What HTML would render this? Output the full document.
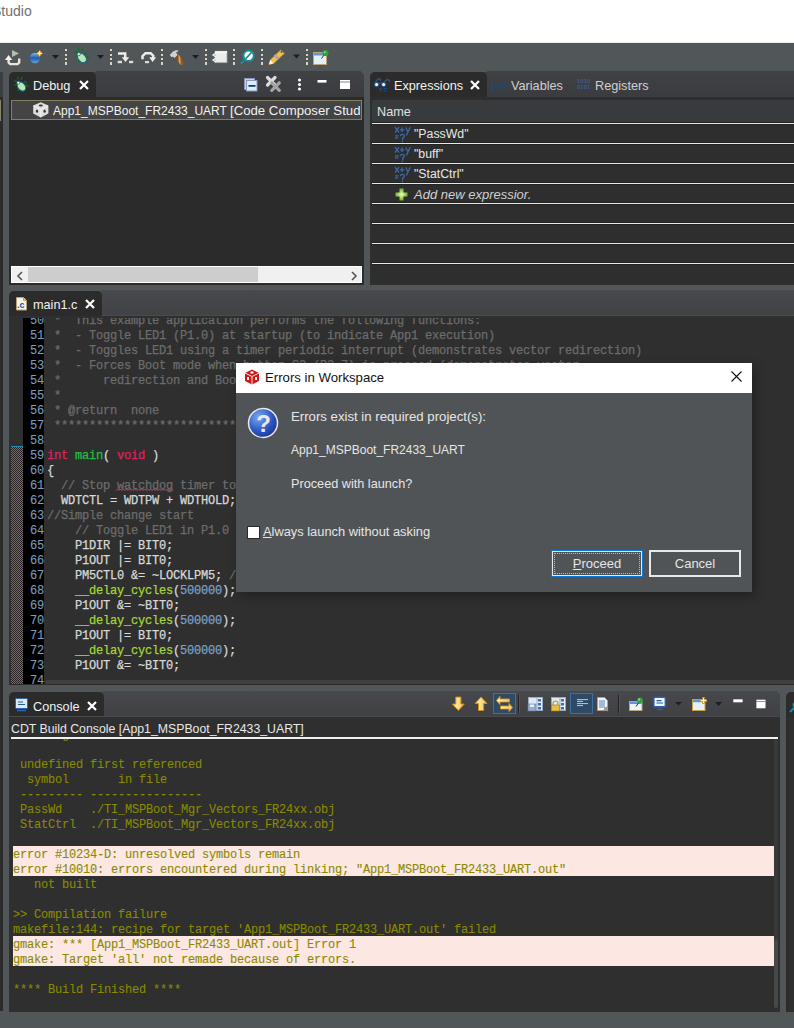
<!DOCTYPE html>
<html><head><meta charset="utf-8">
<style>
*{margin:0;padding:0;box-sizing:border-box}
html,body{width:794px;height:1028px;overflow:hidden;background:#515658;font-family:"Liberation Sans",sans-serif;font-size:12px;color:#ddd}
.a{position:absolute}
.t{position:absolute;white-space:pre;line-height:1}
.mono{font-family:"Liberation Mono",monospace;font-size:12px;letter-spacing:-0.2px;white-space:pre;line-height:15px;-webkit-text-stroke:0.25px currentColor}
.panel{position:absolute;background:#2b2b2b;border-radius:5px 5px 0 0;overflow:hidden}
.hdr{position:absolute;left:0;top:0;right:0;background:linear-gradient(#404144,#3b3c3f)}
.tab{position:absolute;left:0;top:0;background:#2b2b2b;border-radius:5px 5px 0 0}
.tabt{position:absolute;font-size:12.7px;color:#f2f2f2;white-space:pre;line-height:1}
svg{position:absolute;overflow:visible}
.cm{color:#6c6c6c}
.kw{color:#e0205c}
.fn{color:#22c040}
.mc{color:#a6d634}
.nu{color:#7a9fc6}
.con{color:#8a8a00}
.rl{position:absolute;left:2px;width:430px;height:1px;background:#e8e8e8;box-shadow:0 -1px #232323,0 1px #232323}
</style></head>
<body>
<!-- title bar -->
<div class="a" style="left:0;top:0;width:794px;height:42px;background:#fff"></div>
<div class="t" style="left:-8px;top:4px;font-size:14px;color:#707070">Studio</div>
<div class="a" style="left:0;top:42px;width:794px;height:1px;background:#ececec"></div>

<!-- main toolbar -->
<svg width="794" height="28" style="left:0;top:43px" id="tb">
  <defs>
    <linearGradient id="ball" x1="0" y1="0" x2="0" y2="1"><stop offset="0" stop-color="#8ab8e8"/><stop offset="0.5" stop-color="#1c60aa"/><stop offset="1" stop-color="#6aa0d8"/></linearGradient>
    <linearGradient id="hnd" x1="0" y1="0" x2="1" y2="0"><stop offset="0" stop-color="#8a4a10"/><stop offset="0.5" stop-color="#e0a050"/><stop offset="1" stop-color="#9a5a18"/></linearGradient>
  </defs>
  <g fill="#ddd5c4">
    <rect x="65" y="6" width="2" height="2"/><rect x="65" y="11" width="2" height="2"/><rect x="65" y="15" width="2" height="2"/><rect x="65" y="19" width="2" height="3"/>
    <rect x="110" y="6" width="2" height="2"/><rect x="110" y="11" width="2" height="2"/><rect x="110" y="15" width="2" height="2"/><rect x="110" y="19" width="2" height="3"/>
    <rect x="161" y="6" width="2" height="2"/><rect x="161" y="11" width="2" height="2"/><rect x="161" y="15" width="2" height="2"/><rect x="161" y="19" width="2" height="3"/>
    <rect x="205" y="6" width="2" height="2"/><rect x="205" y="11" width="2" height="2"/><rect x="205" y="15" width="2" height="2"/><rect x="205" y="19" width="2" height="3"/>
    <rect x="233" y="6" width="2" height="2"/><rect x="233" y="11" width="2" height="2"/><rect x="233" y="15" width="2" height="2"/><rect x="233" y="19" width="2" height="3"/>
    <rect x="261" y="6" width="2" height="2"/><rect x="261" y="11" width="2" height="2"/><rect x="261" y="15" width="2" height="2"/><rect x="261" y="19" width="2" height="3"/>
    <rect x="306" y="6" width="2" height="2"/><rect x="306" y="11" width="2" height="2"/><rect x="306" y="15" width="2" height="2"/><rect x="306" y="19" width="2" height="3"/>
  </g>
  <g fill="#1e1e1e">
    <path d="M52 12h7l-3.5 4z"/><path d="M97 12h7l-3.5 4z"/><path d="M192 12h7l-3.5 4z"/><path d="M293 11.6h7l-3.5 4z"/>
  </g>
  <!-- icon1 -->
  <path d="M12 7l7 3.5-7 3.5z" fill="#b2bdb2"/>
  <path d="M8.6 16.5v3l1.6 1.6h7.4l1.6-1.6v-4" fill="none" stroke="#ece5d8" stroke-width="2.4"/>
  <path d="M4.9 17l3.7-5 3.7 5z" fill="#f4f0e8"/>
  <!-- icon2 blue ball -->
  <circle cx="35" cy="15" r="5.2" fill="url(#ball)"/>
  <path d="M39.6 6.9l1.4 2.1 2.1 1.4-2.1 1.4-1.4 2.1-1.4-2.1-2.1-1.4 2.1-1.4z" fill="#e8a010"/>
  <path d="M39.6 8.2v4.4M37.4 10.4h4.4" stroke="#fff8d8" stroke-width="1.2"/>
  <!-- bug -->
  <g stroke="#1a6a38" stroke-width="1.3" stroke-linecap="round"><path d="M78.5 5.5v2.5M82.5 6l-1 2M74.5 9.5h3M85 10l2 1M75.5 13.5l2-1M87 13.5l1.5 1.5M78.5 16l.5 3M82.5 18l1 2"/></g>
  <ellipse cx="82" cy="15" rx="3.8" ry="5.2" transform="rotate(-40 82 15)" fill="#b8e8b0" stroke="#1a6a88" stroke-width="1.2"/>
  <circle cx="78.8" cy="11.2" r="1.6" fill="#e8f8e8" stroke="#1a6a88" stroke-width="0.8"/>
  <!-- step into -->
  <path d="M118 10.5h7.2v4.5" fill="none" stroke="#f0ece6" stroke-width="2.5"/>
  <path d="M121.8 14.3h7.4l-3.7 4.7z" fill="#f0ece6"/>
  <rect x="117.7" y="17.8" width="4.3" height="2.4" fill="#e0dcd4"/><rect x="129" y="17.8" width="4.2" height="2.4" fill="#e0dcd4"/>
  <!-- step over -->
  <path d="M142.5 16.2v-3l3-3h5.2l2.5 2.5v2.3" fill="none" stroke="#f0ece6" stroke-width="2.5"/>
  <path d="M149.2 14.2h6.9l-3.5 4.8z" fill="#f0ece6"/>
  <rect x="145" y="18" width="4" height="2.2" fill="#e0dcd4"/>
  <!-- hammer -->
  <path d="M177.5 13.5l4 6.5" stroke="url(#hnd)" stroke-width="4.2" stroke-linecap="round"/>
  <path d="M169.8 12l3.2-3.5 3-1.2 2.6.2-.6 1-2 .8 1.5 2.6-3 3-1.8-1.4-1.2.8z" fill="#d0d0d0"/>
  <!-- console icon -->
  <rect x="215" y="8.2" width="12" height="11.5" fill="#ececec" stroke="#a0a0a0" stroke-width="0.8"/>
  <rect x="215" y="8.2" width="12" height="2" fill="#f8f8f8"/>
  <path d="M216 10l-3 2 3 2M216 15l-3 2 3 2" fill="none" stroke="#f4f4f4" stroke-width="1.4"/>
  <!-- magnifier -->
  <path d="M245 16.5l-3.6 3.6" stroke="#1a8a9a" stroke-width="2.2" stroke-linecap="round"/>
  <circle cx="248.6" cy="12.8" r="5.2" fill="#fff" stroke="#1a8a9a" stroke-width="2"/>
  <path d="M245.5 16l6-6.5" stroke="#1a8a9a" stroke-width="1.8"/>
  <!-- pencil -->
  <path d="M269 21.5l1.2-4.5 10.5-10 3.6 3.4-10.5 10z" fill="#f2c050" stroke="#c88a20" stroke-width="0.8"/>
  <path d="M274.5 12l3.8 3.6" stroke="#a8a8a8" stroke-width="3"/>
  <path d="M269 21.5l1.2-4.5 3.3 3.2z" fill="#fffbea"/>
  <circle cx="281.5" cy="9" r="0.9" fill="#3050a0"/>
  <!-- window w pin -->
  <rect x="313.5" y="9.5" width="13" height="12" fill="#e4f0f8" stroke="#b8a478"/>
  <rect x="314" y="10" width="12" height="2.5" fill="#5a98d8"/>
  <path d="M324 12l-2.5 3.5" stroke="#203020" stroke-width="1"/>
  <circle cx="325.5" cy="10" r="3" fill="#30a040"/><circle cx="324.8" cy="9.2" r="1" fill="#80e080"/>
</svg>

<!-- left cut panel -->
<div class="a" style="left:0;top:72px;width:3px;height:25px;background:#3d3e40"></div>
<div class="a" style="left:0;top:97px;width:3px;height:914px;background:#2b2b2b"></div>
<div class="a" style="left:0;top:100px;width:1px;height:21px;background:#8c846a"></div>

<!-- Debug panel -->
<div class="a" style="left:96px;top:71px;width:265px;height:1px;background:#404144"></div>
<div class="a" style="left:487px;top:71px;width:307px;height:1px;background:#404144"></div>
<div class="panel" style="left:9px;top:72px;width:355px;height:213px">
  <div class="hdr" style="height:25px"></div>
  <div class="tab" style="width:87px;height:25px"></div>
  <svg width="20" height="20" style="left:-2px;top:-1.5px">
    <g stroke="#1a6a38" stroke-width="1.2" stroke-linecap="round"><path d="M11 6v2M15 6.5l-1 2M7 10h2.5M17.5 10.5l2 1M8 14l2-1M19.5 14l1.5 1.5M11 16.5l.5 3M15 18.5l1 2"/></g>
    <ellipse cx="14.5" cy="15.5" rx="3.6" ry="5" transform="rotate(-40 14.5 15.5)" fill="#b8e8b0" stroke="#1a6a88" stroke-width="1.1"/>
    <circle cx="11.3" cy="11.7" r="1.5" fill="#e8f8e8" stroke="#1a6a88" stroke-width="0.7"/>
  </svg>
  <div class="tabt" style="left:24px;top:8px">Debug</div>
  <svg width="12" height="12" style="left:70px;top:8px"><path d="M1 1l8 8M9 1l-8 8" stroke="#fff" stroke-width="2.2"/></svg>
  <svg width="120" height="25" style="left:233px;top:0">
    <rect x="2.5" y="6.5" width="10" height="11" fill="#b8d8f4" stroke="#8898b8"/><rect x="4.5" y="8.5" width="10.5" height="10.5" fill="#d8ecfc" stroke="#8898b8"/><path d="M6.5 13.8h7" stroke="#10386a" stroke-width="1.8"/>
    <path d="M25.5 5.5l7.5 7.5M33 5.5l-7.5 7.5" stroke="#dcdcdc" stroke-width="3.2" stroke-linecap="round"/>
    <path d="M29.8 10.8l7.5 7.5M37.3 10.8l-7.5 7.5" stroke="#a4a4a4" stroke-width="3.2" stroke-linecap="round"/>
    <circle cx="57.5" cy="8" r="1.5" fill="#fff"/><circle cx="57.5" cy="12.5" r="1.5" fill="#fff"/><circle cx="57.5" cy="17" r="1.5" fill="#fff"/>
    <rect x="75.5" y="8" width="9" height="2.6" fill="#fff"/>
    <rect x="98" y="8" width="10" height="9" fill="#fff"/><rect x="98" y="9.5" width="10" height="1" fill="#888"/>
  </svg>
  <div class="a" style="left:2px;top:28px;width:351px;height:20px;border:1px solid #857f65;background:#444"></div>
  <svg width="16" height="16" style="left:24px;top:30px">
    <path d="M7.8 0.3L15.4 3.6V11.6L7.8 15.6L0.2 11.6V3.6Z" fill="#dedede"/>
    <path d="M0.6 3.8L7.8 7.4L15 3.8M7.8 7.4V15.2" stroke="#f4f4f4" stroke-width="1" fill="none"/>
    <ellipse cx="7.8" cy="3.6" rx="2" ry="1" fill="#333"/><ellipse cx="4" cy="9.2" rx="1.1" ry="1.6" fill="#333"/><ellipse cx="11.6" cy="9.2" rx="1.1" ry="1.6" fill="#333"/>
  </svg>
  <div class="t" style="left:44px;top:32px;width:307px;height:16px;overflow:hidden;font-size:12px;color:#f2f2f2">App1_MSPBoot_FR2433_UART <span style="font-size:13.2px">[Code Composer Studio]</span></div>
  <div class="a" style="left:2px;top:194px;width:351px;height:17px;background:#f0f0f0;border:1px solid #fff"></div>
  <div class="a" style="left:19px;top:195px;width:230px;height:15px;background:#cdcdcd"></div>
  <svg width="10" height="10" style="left:6px;top:199px"><path d="M7 1l-4 4 4 4" fill="none" stroke="#555" stroke-width="1.6"/></svg>
  <svg width="10" height="10" style="left:341px;top:199px"><path d="M2 1l4 4-4 4" fill="none" stroke="#555" stroke-width="1.6"/></svg>
</div>

<!-- Expressions panel -->
<div class="panel" style="left:370px;top:72px;width:430px;height:213px;background:#2e2e2e">
  <div class="hdr" style="height:25px"></div>
  <div class="tab" style="width:117px;height:25px"></div>
  <svg width="20" height="20" style="left:4px;top:5px">
    <path d="M0.8 7Q3 1.5 5.3 1.6Q6.6 2 6.6 4M8.8 7Q11.5 2.5 14 2.6Q15.6 3 16 5M2.4 6.2H9.5" stroke="#2f5a8c" fill="none" stroke-width="1.1"/>
    <circle cx="2.6" cy="7.6" r="2.7" fill="#2f5a8c"/><circle cx="9.6" cy="7.6" r="2.7" fill="#2f5a8c"/>
    <circle cx="2.6" cy="7.6" r="1.5" fill="#eef8ff"/><circle cx="9.6" cy="7.6" r="1.5" fill="#eef8ff"/>
    <path d="M5.3 11l2.4 3M7.7 11l-2.4 3M9.5 11.5h3.5M9.5 13.8h3.5" stroke="#1f4a80" stroke-width="1.1"/>
  </svg>
  <div class="tabt" style="left:24px;top:8px">Expressions</div>
  <svg width="12" height="12" style="left:100px;top:8px"><path d="M1 1l8 8M9 1l-8 8" stroke="#fff" stroke-width="2.2"/></svg>
  <div class="t" style="left:121px;top:9px;font-size:9.5px;letter-spacing:-0.3px;color:#29476e;font-weight:bold">(x)=</div>
  <div class="tabt" style="left:141px;top:8px;color:#d0d0d0">Variables</div>
  <div class="t" style="left:207px;top:6px;font-size:6px;line-height:6px;color:#3a5a8a;font-weight:bold">1010
0101</div>
  <div class="tabt" style="left:225px;top:8px;color:#d0d0d0">Registers</div>
  <div class="a" style="left:2px;top:28px;width:430px;height:23px;background:#383b3d"></div>
  <div class="tabt" style="left:7px;top:34px;color:#e0e0e0">Name</div>
  <div class="rl" style="top:51px"></div>
  <div class="rl" style="top:71px"></div>
  <div class="rl" style="top:91px"></div>
  <div class="rl" style="top:111px"></div>
  <div class="rl" style="top:131px"></div>
  <div class="rl" style="top:151px"></div>
  <div class="rl" style="top:171px"></div>
  <div class="rl" style="top:191px"></div>
  <svg width="18" height="18" style="left:24px;top:54px"><g stroke="#3a6aa8" stroke-width="1.3" fill="none"><path d="M1 1.2l4 5.4M5 1.2l-4 5.4M5.8 3.8h4.6M8.1 1.5v4.6M11.6 1.2l2.3 4.6M16.2 1.2l-3.8 8.2M1 9.8h3.4M1 11.8h3.4M6.3 10.3q0-2 2-2q2 0 2 1.8q0 1.2-1.6 2v1.8"/></g><circle cx="8.4" cy="15.4" r="0.9" fill="#3a6aa8"/></svg>
  <svg width="18" height="18" style="left:24px;top:74px"><g stroke="#3a6aa8" stroke-width="1.3" fill="none"><path d="M1 1.2l4 5.4M5 1.2l-4 5.4M5.8 3.8h4.6M8.1 1.5v4.6M11.6 1.2l2.3 4.6M16.2 1.2l-3.8 8.2M1 9.8h3.4M1 11.8h3.4M6.3 10.3q0-2 2-2q2 0 2 1.8q0 1.2-1.6 2v1.8"/></g><circle cx="8.4" cy="15.4" r="0.9" fill="#3a6aa8"/></svg>
  <svg width="18" height="18" style="left:24px;top:94px"><g stroke="#3a6aa8" stroke-width="1.3" fill="none"><path d="M1 1.2l4 5.4M5 1.2l-4 5.4M5.8 3.8h4.6M8.1 1.5v4.6M11.6 1.2l2.3 4.6M16.2 1.2l-3.8 8.2M1 9.8h3.4M1 11.8h3.4M6.3 10.3q0-2 2-2q2 0 2 1.8q0 1.2-1.6 2v1.8"/></g><circle cx="8.4" cy="15.4" r="0.9" fill="#3a6aa8"/></svg>
  <svg width="14" height="14" style="left:25px;top:116px"><defs><radialGradient id="pg"><stop offset="0" stop-color="#f0ffb0"/><stop offset="1" stop-color="#6cb02a"/></radialGradient></defs><path d="M4.5 0.5h4v4h4v4h-4v4h-4v-4h-4v-4h4z" fill="url(#pg)"/></svg>
  <div class="t" style="left:44px;top:56px;font-size:12.3px;color:#e8e8e8">"PassWd"</div>
  <div class="t" style="left:44px;top:76px;font-size:12.3px;color:#e8e8e8">"buff"</div>
  <div class="t" style="left:44px;top:96px;font-size:12.3px;color:#e8e8e8">"StatCtrl"</div>
  <div class="t" style="left:44px;top:116px;font-size:13px;color:#d0d0d0;font-style:italic">Add new expressior.</div>
</div>

<!-- Editor panel -->
<div class="a" style="left:101px;top:290px;width:693px;height:1px;background:#47494c"></div>
<div class="a" style="left:103px;top:691px;width:674px;height:1px;background:#46484b"></div>
<div class="panel" style="left:9px;top:291px;width:790px;height:394px;background:#2f2f2f">
  <div class="hdr" style="height:25px;background:linear-gradient(#47494c,#414245);border-bottom:1px solid #4a4b4d"></div>
  <div class="tab" style="width:93px;height:25px;background:#2b2b2b"></div>
  <svg width="14" height="16" style="left:7px;top:6px">
    <path d="M0.5 0.5h7l3 3v9.5h-10z" fill="#f4f4f4" stroke="#c0a060"/><path d="M7.5 0.5v3h3" fill="#e0c890" stroke="#c0a060"/>
    <text x="1" y="11" font-family="Liberation Sans" font-size="9" font-weight="bold" fill="#2050a0">.c</text>
  </svg>
  <div class="tabt" style="left:24px;top:8px">main1.c</div>
  <svg width="12" height="12" style="left:76px;top:8px"><path d="M1 1l8 8M9 1l-8 8" stroke="#fff" stroke-width="2.2"/></svg>
  <div class="a" style="left:14px;top:27px;width:21px;height:366px;background:#000"></div>
  <div class="a" style="left:2px;top:155px;width:12px;height:238px;background:#1b8cb6"></div>
  <div class="a" style="left:2px;top:156px;width:12px;height:237px;background:repeating-conic-gradient(#1b8cb6 0 25%, #2a2222 0 50%) 0 0/2px 2px"></div>
  <div class="a" style="left:0;top:393px;width:790px;height:1px;background:#2b2b2b"></div>
  <div class="a" style="left:0;top:27px;width:790px;height:366px;overflow:hidden">
<div class="a mono" style="left:14px;top:-4px;width:21px;text-align:right;color:#7c9cbc;-webkit-text-stroke:0.1px currentColor">50
51
52
53
54
55
56
57
58
59
60
61
62
63
64
65
66
67
68
69
70
71
72
73
74</div>
  <svg width="60" height="4" style="left:107px;top:170px"><path d="M0 2.5 l1.5 -1.5 l1.5 1.5 l1.5 -1.5 l1.5 1.5 l1.5 -1.5 l1.5 1.5 l1.5 -1.5 l1.5 1.5 l1.5 -1.5 l1.5 1.5 l1.5 -1.5 l1.5 1.5 l1.5 -1.5 l1.5 1.5 l1.5 -1.5 l1.5 1.5 l1.5 -1.5 l1.5 1.5 l1.5 -1.5 l1.5 1.5 l1.5 -1.5 l1.5 1.5 l1.5 -1.5 l1.5 1.5 l1.5 -1.5 l1.5 1.5 l1.5 -1.5 l1.5 1.5 l1.5 -1.5 l1.5 1.5 l1.5 -1.5 l1.5 1.5 l1.5 -1.5 l1.5 1.5 l1.5 -1.5 l1.5 1.5 l1.5 -1.5 l1.5 1.5" fill="none" stroke="#d04068" stroke-width="1"/></svg>
  <div class="a mono" style="left:38px;top:-4px;color:#d8d8d8"><span class="cm"> *  This example application performs the following functions:
 *  - Toggle LED1 (P1.0) at startup (to indicate App1 execution)
 *  - Toggles LED1 using a timer periodic interrupt (demonstrates vector redirection)
 *  - Forces Boot mode when button S2 (P2.7) is pressed (demonstrates vector
 *      redirection and Boot
 *
 * @return  none
 ******************************************************************************</span>

<span class="kw">int</span> <span class="fn">main</span>( <span class="kw">void</span> )
{
  <span class="cm">// Stop watchdog timer to prevent time out reset</span>
  WDTCTL = WDTPW + WDTHOLD;
<span class="cm">//Simple change start</span>
    <span class="cm">// Toggle LED1 in P1.0</span>
    P1DIR |= BIT0;
    P1OUT |= BIT0;
    PM5CTL0 &amp;= ~LOCKLPM5; <span class="cm">// Disable the GPIO</span>
    <span class="mc">__delay_cycles</span>(<span class="nu">500000</span>);
    P1OUT &amp;= ~BIT0;
    <span class="mc">__delay_cycles</span>(<span class="nu">500000</span>);
    P1OUT |= BIT0;
    <span class="mc">__delay_cycles</span>(<span class="nu">500000</span>);
    P1OUT &amp;= ~BIT0;
</div>
</div>
  <div class="a" style="left:36px;top:389px;width:760px;height:4px;background:#404040;border-radius:2px"></div>
</div>

<!-- Console panel -->
<div class="panel" style="left:9px;top:692px;width:771px;height:320px;background:#2f2f2f">
  <div class="hdr" style="height:25px;background:linear-gradient(#46484b,#404144);border-bottom:1px solid #494a4c"></div>
  <div class="tab" style="width:95px;height:24px;background:#2b2b2b"></div>
  <svg width="16" height="16" style="left:6px;top:6px">
    <rect x="0.5" y="0.5" width="12" height="10" rx="1" fill="#dce8f4" stroke="#2a68b0"/><path d="M3 4h5M3 6.5h7" stroke="#2a5a90" stroke-width="1.2"/><path d="M2 12.5h9" stroke="#2a68b0" stroke-width="1.5"/>
  </svg>
  <div class="tabt" style="left:24px;top:9px">Console</div>
  <svg width="12" height="12" style="left:78px;top:9px"><path d="M1 1l8 8M9 1l-8 8" stroke="#fff" stroke-width="2.2"/></svg>
  <div class="t" style="left:2px;top:31px;font-size:12.3px;color:#e8e8e8">CDT Build Console [App1_MSPBoot_FR2433_UART]</div>
  <div class="a" style="left:2px;top:45px;width:767px;height:2px;background:#f0f0f0"></div>
  <div class="a" style="left:0;top:47px;width:771px;height:273px;overflow:hidden">
    <div class="a" style="left:4px;top:107px;width:761px;height:30px;background:#fde7e3"></div>
    <div class="a" style="left:4px;top:197px;width:761px;height:30px;background:#fde7e3"></div>
    <div class="a" style="left:765px;top:0;width:4px;height:269px;background:#393939;border-radius:0 0 2px 2px"></div>
    <div class="a" style="left:765px;top:200px;width:4px;height:69px;background:#474747;border-radius:2px"></div>
    <div class="a mono con" style="left:4px;top:-11px;-webkit-text-stroke:0.1px currentColor"><span>&lt;Linking&gt;</span>

 undefined first referenced
  symbol       in file
 --------- ----------------
 PassWd    ./TI_MSPBoot_Mgr_Vectors_FR24xx.obj
 StatCtrl  ./TI_MSPBoot_Mgr_Vectors_FR24xx.obj

error #10234-D: unresolved symbols remain
error #10010: errors encountered during linking; "App1_MSPBoot_FR2433_UART.out"
   not built

&gt;&gt; Compilation failure
makefile:144: recipe for target 'App1_MSPBoot_FR2433_UART.out' failed
gmake: *** [App1_MSPBoot_FR2433_UART.out] Error 1
gmake: Target 'all' not remade because of errors.

**** Build Finished ****</div>
  </div>
</div>

<!-- right strip panel -->
<div class="panel" style="left:786px;top:692px;width:20px;height:320px;background:#2b2b2b">
  <svg width="20" height="20" style="left:3px;top:8px"><circle cx="7" cy="5" r="3.5" fill="#1b8aa0"/><path d="M5 8l-4 4" stroke="#1b8aa0" stroke-width="2.2"/></svg>
  <div class="a" style="left:2px;top:26px;width:20px;height:294px;background:#2f2f2f"></div>
</div>

<!-- Dialog -->
<div class="a" style="left:236px;top:363px;width:516px;height:229px;background:#505457;box-shadow:3px 4px 10px rgba(0,0,0,0.3)">
  <div class="a" style="left:0;top:0;width:516px;height:30px;background:#fff"></div>
  <svg width="16" height="16" style="left:8px;top:6px">
    <path d="M8 0.5l7 3.5v8l-7 3.5-7-3.5v-8z" fill="#d01818"/><path d="M1 4l7 3.5 7-3.5M8 7.5v8" stroke="#fff" stroke-width="0.9" fill="none"/>
    <rect x="6.5" y="2.5" width="3" height="2" fill="#fff"/><rect x="3" y="8" width="2" height="3" fill="#fff"/><rect x="11" y="8" width="2" height="3" fill="#fff"/>
  </svg>
  <div class="t" style="left:29px;top:8px;font-size:13.2px;color:#111">Errors in Workspace</div>
  <svg width="12" height="12" style="left:495px;top:8px"><path d="M0.5 0.5l10 10M10.5 0.5l-10 10" stroke="#111" stroke-width="1.1"/></svg>
  <svg width="32" height="32" style="left:12px;top:45px">
    <defs><radialGradient id="qg" cx="0.35" cy="0.3" r="0.8"><stop offset="0" stop-color="#7aa8f0"/><stop offset="0.6" stop-color="#2a56c0"/><stop offset="1" stop-color="#1a3290"/></radialGradient></defs>
    <circle cx="15" cy="15" r="14.5" fill="url(#qg)" stroke="#e8e8f0" stroke-width="1.5"/>
    <text x="15.5" y="23.5" text-anchor="middle" font-family="Liberation Sans" font-size="24" font-weight="bold" fill="#e8e8ee">?</text>
  </svg>
  <div class="t" style="left:55px;top:47px;font-size:13.2px;color:#e6e6e6">Errors exist in required project(s):</div>
  <div class="t" style="left:55px;top:81px;font-size:12px;color:#e6e6e6">App1_MSPBoot_FR2433_UART</div>
  <div class="t" style="left:55px;top:115px;font-size:12.7px;color:#e6e6e6">Proceed with launch?</div>
  <div class="a" style="left:11px;top:163px;width:13px;height:13px;background:#fff;border:1px solid #2a2a2a"></div>
  <div class="t" style="left:27px;top:163px;font-size:12.85px;color:#e6e6e6"><u>A</u>lways launch without asking</div>
  <div class="a" style="left:315px;top:187px;width:92px;height:27px;border:1px solid #0a78d7"><div class="a" style="left:0;top:0;right:0;bottom:0;border:1px solid #e8e8e8"></div><div class="a" style="left:2px;top:2px;right:2px;bottom:2px;border:1px dotted #bbb"></div></div>
  <div class="t" style="left:315px;top:194px;width:92px;text-align:center;font-size:13px;color:#e6e6e6"><u>P</u>roceed</div>
  <div class="a" style="left:413px;top:187px;width:92px;height:27px;border:2px solid #e8e8e8"></div>
  <div class="t" style="left:413px;top:194px;width:92px;text-align:center;font-size:13px;color:#e6e6e6">Cancel</div>
</div>

<!-- console toolbar -->
<svg width="340" height="24" style="left:440px;top:692px">
  <defs><linearGradient id="gold" x1="0" y1="0" x2="1" y2="0"><stop offset="0" stop-color="#fff4c8"/><stop offset="1" stop-color="#f4c458"/></linearGradient></defs>
  <path d="M15.8 5.1h5.1v7h3.3l-5.85 6.3-5.85-6.3h3.3z" fill="url(#gold)" stroke="#d89010" stroke-width="1"/>
  <path d="M41 5.1l5.9 6.4h-3.3v7h-5.1v-7h-3.3z" fill="url(#gold)" stroke="#d89010" stroke-width="1"/>
  <rect x="53.5" y="1.5" width="22" height="20" fill="#2e4a66" stroke="#3a70a8"/>
  <path d="M60 7h9.5v3h-9.5v2.6l-3.6-4.1 3.6-4.1z" fill="url(#gold)" stroke="#d89010" stroke-width="0.9"/>
  <path d="M69 14h-8.5v3h8.5v2.6l3.6-4.1-3.6-4.1z" fill="url(#gold)" stroke="#d89010" stroke-width="0.9"/>
  <rect x="78" y="3" width="1" height="18" fill="#222"/><rect x="79" y="3" width="1" height="18" fill="#555"/>
  <rect x="88.5" y="5.5" width="14" height="13" fill="#dceaf8" stroke="#9aaac0"/><rect x="97" y="5.5" width="5.5" height="13" fill="#e8f0f8" stroke="#9aaac0"/>
  <rect x="98" y="7" width="3" height="2.5" fill="#3a70b0"/><rect x="98" y="11" width="3" height="2.5" fill="#3a70b0"/><rect x="98" y="15" width="3" height="2.5" fill="#3a70b0"/>
  <rect x="88" y="12" width="8" height="7" fill="#9aaac8" stroke="#6a7a98" stroke-width="0.6"/><rect x="90" y="12.5" width="4" height="2.5" fill="#e8eef8"/>
  <rect x="111.5" y="5.5" width="14" height="13" fill="#dceaf8" stroke="#9aaac0"/><rect x="120" y="5.5" width="5.5" height="13" fill="#e8f0f8" stroke="#9aaac0"/>
  <rect x="121" y="7" width="3" height="2.5" fill="#3a70b0"/><rect x="121" y="11" width="3" height="2.5" fill="#3a70b0"/><rect x="121" y="15" width="3" height="2.5" fill="#3a70b0"/>
  <path d="M113 13v-1.5a2.5 2.5 0 0 1 5 0V13" fill="none" stroke="#c89a20" stroke-width="1.2"/><rect x="111.5" y="13" width="8" height="6" fill="#e8c040" stroke="#a07810" stroke-width="0.6"/>
  <rect x="130.5" y="1.5" width="22" height="20" fill="#2e4a66" stroke="#3a70a8"/>
  <path d="M137 7.6h11M137 9.4h6M137 11.6h11M137 13.6h6" stroke="#b8cce4" stroke-width="1"/>
  <path d="M157.5 5.5h7l3 3v10h-10z" fill="#f0f4fa" stroke="#b0a080"/><path d="M159 9h6M159 11h6M159 13h6M159 15h4" stroke="#4a70b0" stroke-width="0.9"/>
  <path d="M163.5 14.5l4.5 4.5M168 14.5l-4.5 4.5" stroke="#909090" stroke-width="1.6"/>
  <rect x="178" y="3" width="1" height="18" fill="#222"/><rect x="179" y="3" width="1" height="18" fill="#555"/>
  <rect x="189.5" y="9.5" width="12.5" height="9" fill="#eaf4fc" stroke="#b8a478"/><rect x="190" y="10" width="11.5" height="2" fill="#5a98d8"/><path d="M198.5 11l-2.5 3.5" stroke="#203020"/><circle cx="200" cy="8.3" r="2.9" fill="#30a040"/><circle cx="199.3" cy="7.6" r="1" fill="#90e890"/>
  <rect x="213.8" y="5.3" width="11.6" height="9.6" rx="1" fill="#f0f6fc" stroke="#2a60b0" stroke-width="1.6"/><path d="M216.5 8.6h5M216.5 11h6.5" stroke="#2a5a90" stroke-width="1.2"/><path d="M217 17.5h5.5M219.7 15v2.5" stroke="#2a60b0" stroke-width="1.3"/>
  <path d="M235 10h7l-3.5 3.6z" fill="#1e1e1e"/>
  <rect x="252.5" y="7.5" width="12.5" height="11" fill="#e4f0fc" stroke="#c8a040"/><rect x="253" y="8" width="11.5" height="2.2" fill="#5a98d8"/>
  <path d="M263.5 5v7M260 8.5h7" stroke="#d89a20" stroke-width="2.4"/><path d="M263.5 6v5M261 8.5h5" stroke="#fff8e0" stroke-width="1"/>
  <path d="M275 10h7l-3.5 4z" fill="#1e1e1e"/>
  <rect x="293.3" y="7.3" width="9.3" height="3" fill="#fff"/>
  <rect x="316.4" y="7.7" width="9.1" height="8.6" fill="#fff"/><rect x="316.4" y="9.2" width="9.1" height="0.8" fill="#777"/>
</svg>
</body></html>
